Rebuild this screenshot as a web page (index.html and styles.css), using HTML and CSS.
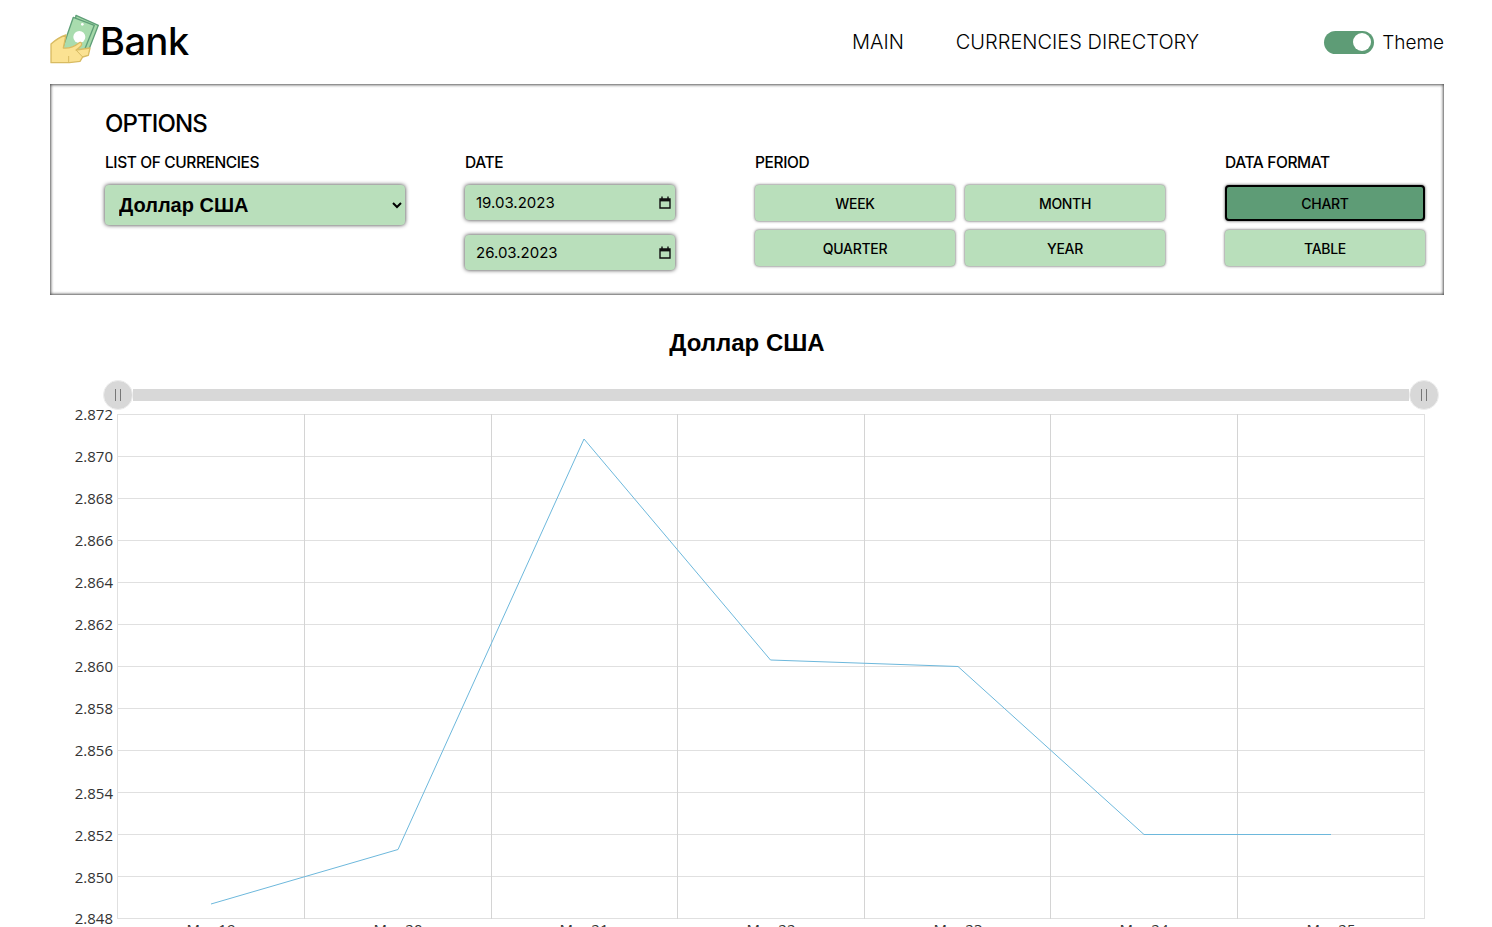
FILE: index.html

```html
<!DOCTYPE html>
<html lang="en">
<head>
  <meta charset="UTF-8" />
  <meta name="viewport" content="width=device-width, initial-scale=1.0"/>
  <title>Bank</title>
  <link rel="stylesheet" href="styles.css">
</head>
<body>
  <header class="header">
    <a class="logo" href="#">
      <svg class="logo-icon" viewBox="30 20 150 156" width="50" height="52">
        <path d="M108 30 L175 60 L140 150 L90 130 Z" fill="#a5d8a8" stroke="#5f9f78" stroke-width="4" stroke-linejoin="round"/>
        <path d="M100 36 L163 60 L125 155 L68 128 Z" fill="#a9dcae" stroke="#5f9f78" stroke-width="4" stroke-linejoin="round"/>
        <circle cx="118" cy="95" r="18" fill="#fff"/>
        <circle cx="127" cy="57" r="4" fill="#fff"/>
        <path d="M33 116 C45 105 60 95 78 89 L70 128 C85 130 105 122 118 112 C124 108 128 118 122 123 C118 127 112 132 108 134 L150 128 L145 150 L128 155 L120 168 L88 172 L33 172 Z" fill="#fbe292" stroke="#d8bb62" stroke-width="4" stroke-linejoin="round"/>
        <path d="M86 152 L86 170 M108 134 L128 155" fill="none" stroke="#d8bb62" stroke-width="3"/>
      </svg>
      <span class="logo-text">Bank</span>
    </a>
    <nav class="nav">
      <a href="#">MAIN</a>
      <a href="#">CURRENCIES DIRECTORY</a>
    </nav>
    <label class="theme">
      <span class="toggle"><span class="knob"></span></span>
      Theme
    </label>
  </header>

  <section class="options">
    <h2>OPTIONS</h2>
    <div class="options-grid">
      <div>
        <p class="label">LIST OF CURRENCIES</p>
        <select class="currency">
          <option>Доллар США</option>
          <option>Евро</option>
        </select>
      </div>
      <div>
        <p class="label">DATE</p>
        <div class="date-list">
          <div class="date-field"><span>19.03.2023</span><svg viewBox="0 0 12 13" width="12" height="13"><path d="M1 3h10v9H1z M3 0.5v2.5 M9 0.5v2.5" fill="none" stroke="#111" stroke-width="1.4"/><path d="M1 3h10v2.4H1z" fill="#111"/></svg></div>
          <div class="date-field"><span>26.03.2023</span><svg viewBox="0 0 12 13" width="12" height="13"><path d="M1 3h10v9H1z M3 0.5v2.5 M9 0.5v2.5" fill="none" stroke="#111" stroke-width="1.4"/><path d="M1 3h10v2.4H1z" fill="#111"/></svg></div>
        </div>
      </div>
      <div>
        <p class="label">PERIOD</p>
        <div class="period-btns">
          <button class="btn">WEEK</button>
          <button class="btn">MONTH</button>
          <button class="btn">QUARTER</button>
          <button class="btn">YEAR</button>
        </div>
      </div>
      <div>
        <p class="label">DATA FORMAT</p>
        <div class="format-btns">
          <button class="btn btn-active">CHART</button>
          <button class="btn">TABLE</button>
        </div>
      </div>
    </div>
  </section>

  <section class="chart">
    <h3 class="chart-title">Доллар США</h3>
    <svg class="chart-svg" width="1492" height="562" viewBox="0 365 1492 562">
      <rect x="133" y="389" width="1276" height="12" fill="#d8d8d8"/>
      <g class="grid">
        <path d="M117 414.5H1424M117 456.5H1424M117 498.5H1424M117 540.5H1424M117 582.5H1424M117 624.5H1424M117 666.5H1424M117 708.5H1424M117 750.5H1424M117 792.5H1424M117 834.5H1424M117 876.5H1424M117 918.5H1424" stroke="#e0e0e0"/>
        <path d="M304.5 414V919M491.5 414V919M677.5 414V919M864.5 414V919M1050.5 414V919M1237.5 414V919" stroke="#d4d4d4"/>
        <path d="M117.5 414V919M1424.5 414V919" stroke="#e0e0e0"/>
      </g>
      <polyline points="211,904 398,849.5 584,439 770.5,660 958,666.5 1144,834.5 1331,834.5" fill="none" stroke="#6db8dc" stroke-width="1"/>
      <g class="handle">
        <circle cx="118" cy="395" r="14.5"/>
        <path d="M115.5 389V401M120.5 389V401"/>
      </g>
      <g class="handle">
        <circle cx="1424" cy="395" r="14.5"/>
        <path d="M1421.5 389V401M1426.5 389V401"/>
      </g>
      <g class="y-labels">
        <text x="113" y="420">2.872</text>
        <text x="113" y="462">2.870</text>
        <text x="113" y="504">2.868</text>
        <text x="113" y="546">2.866</text>
        <text x="113" y="588">2.864</text>
        <text x="113" y="630">2.862</text>
        <text x="113" y="672">2.860</text>
        <text x="113" y="714">2.858</text>
        <text x="113" y="756">2.856</text>
        <text x="113" y="799">2.854</text>
        <text x="113" y="841">2.852</text>
        <text x="113" y="883">2.850</text>
        <text x="113" y="924">2.848</text>
      </g>
      <g class="x-labels">
        <text x="211" y="935">Mar 19</text>
        <text x="398" y="935">Mar 20</text>
        <text x="584" y="935">Mar 21</text>
        <text x="771" y="935">Mar 22</text>
        <text x="958" y="935">Mar 23</text>
        <text x="1144" y="935">Mar 24</text>
        <text x="1331" y="935">Mar 25</text>
      </g>
    </svg>
  </section>
</body>
</html>
```

FILE: styles.css

```css
html, body {
  height: 927px;
  overflow: hidden;
}
body {
  margin: 0;
  font-family: Inter, "Noto Sans", sans-serif;
  color: #000;
  background: #fff;
}
a {
  color: inherit;
  text-decoration: none;
}

.header {
  display: flex;
  align-items: center;
  height: 84px;
  padding: 0 48px 0 50px;
}
.logo {
  display: flex;
  align-items: center;
}
.logo-icon {
  margin-bottom: 8px;
}
.logo-text {
  margin-bottom: 2px;
  font-size: 38px;
  font-weight: 500;
  letter-spacing: -0.5px;
}
.nav {
  display: flex;
  gap: 52px;
  margin-left: auto;
  font-size: 20px;
  font-weight: 300;
}
.theme {
  display: flex;
  align-items: center;
  gap: 8px;
  margin-left: 125px;
  font-size: 19px;
  font-weight: 300;
}
.toggle {
  display: flex;
  align-items: center;
  justify-content: flex-end;
  width: 50px;
  height: 23px;
  padding-right: 3px;
  box-sizing: border-box;
  border-radius: 12px;
  background: #5e9c76;
}
.knob {
  width: 18px;
  height: 18px;
  border-radius: 50%;
  background: #fff;
}

.options {
  height: 211px;
  margin: 0 48px 0 50px;
  padding: 25px 0 0 55px;
  box-sizing: border-box;
  box-shadow: inset 0 0 3px 1px #555;
}
.options h2 {
  margin: 0 0 13px;
  font-size: 24px;
  line-height: 30px;
  font-weight: 500;
  letter-spacing: -0.9px;
}
.options-grid {
  display: grid;
  grid-template-columns: 360px 290px 470px 200px;
}
.label {
  margin: 0 0 11px;
  font-size: 15.5px;
  line-height: 22px;
  font-weight: 500;
  letter-spacing: -0.4px;
}
.currency {
  display: block;
  width: 300px;
  height: 40px;
  padding-left: 10px;
  border: none;
  border-radius: 4px;
  background: #b9dfbb;
  font-family: "Liberation Sans", Arial, sans-serif;
  font-size: 20px;
  font-weight: 700;
  color: #000;
  box-shadow: 0 0 4px #333;
}
.date-list {
  display: flex;
  flex-direction: column;
  gap: 15px;
}
.date-field {
  display: flex;
  align-items: center;
  justify-content: space-between;
  width: 210px;
  height: 35px;
  padding: 0 4px 0 11px;
  box-sizing: border-box;
  border-radius: 4px;
  background: #b9dfbb;
  font-size: 15px;
  box-shadow: 0 0 4px #333;
}
.period-btns {
  display: grid;
  grid-template-columns: 200px 200px;
  gap: 9px 10px;
}
.format-btns {
  display: grid;
  grid-template-columns: 200px;
  gap: 9px;
}
.btn {
  height: 36px;
  border: none;
  border-radius: 4px;
  background: #b9dfbb;
  font-family: Inter, "Noto Sans", sans-serif;
  font-size: 14px;
  font-weight: 500;
  letter-spacing: -0.3px;
  color: #000;
  box-shadow: 0 0 3px #444;
}
.btn-active {
  background: #5e9c76;
  border: 2px solid #000;
}

.chart-title {
  margin: 0;
  padding: 34px 0 0 2px;
  height: 36px;
  text-align: center;
  font-family: "Liberation Sans", Arial, sans-serif;
  font-size: 24px;
  line-height: 28px;
  font-weight: 700;
}
.chart-svg {
  display: block;
}
.handle circle {
  fill: #d8d8d8;
  stroke: #eee;
}
.handle path {
  stroke: #777;
  fill: none;
}
.y-labels text,
.x-labels text {
  font-family: "Open Sans", sans-serif;
  font-size: 15px;
  fill: #333;
}
.y-labels text {
  text-anchor: end;
}
.x-labels text {
  text-anchor: middle;
}
```
